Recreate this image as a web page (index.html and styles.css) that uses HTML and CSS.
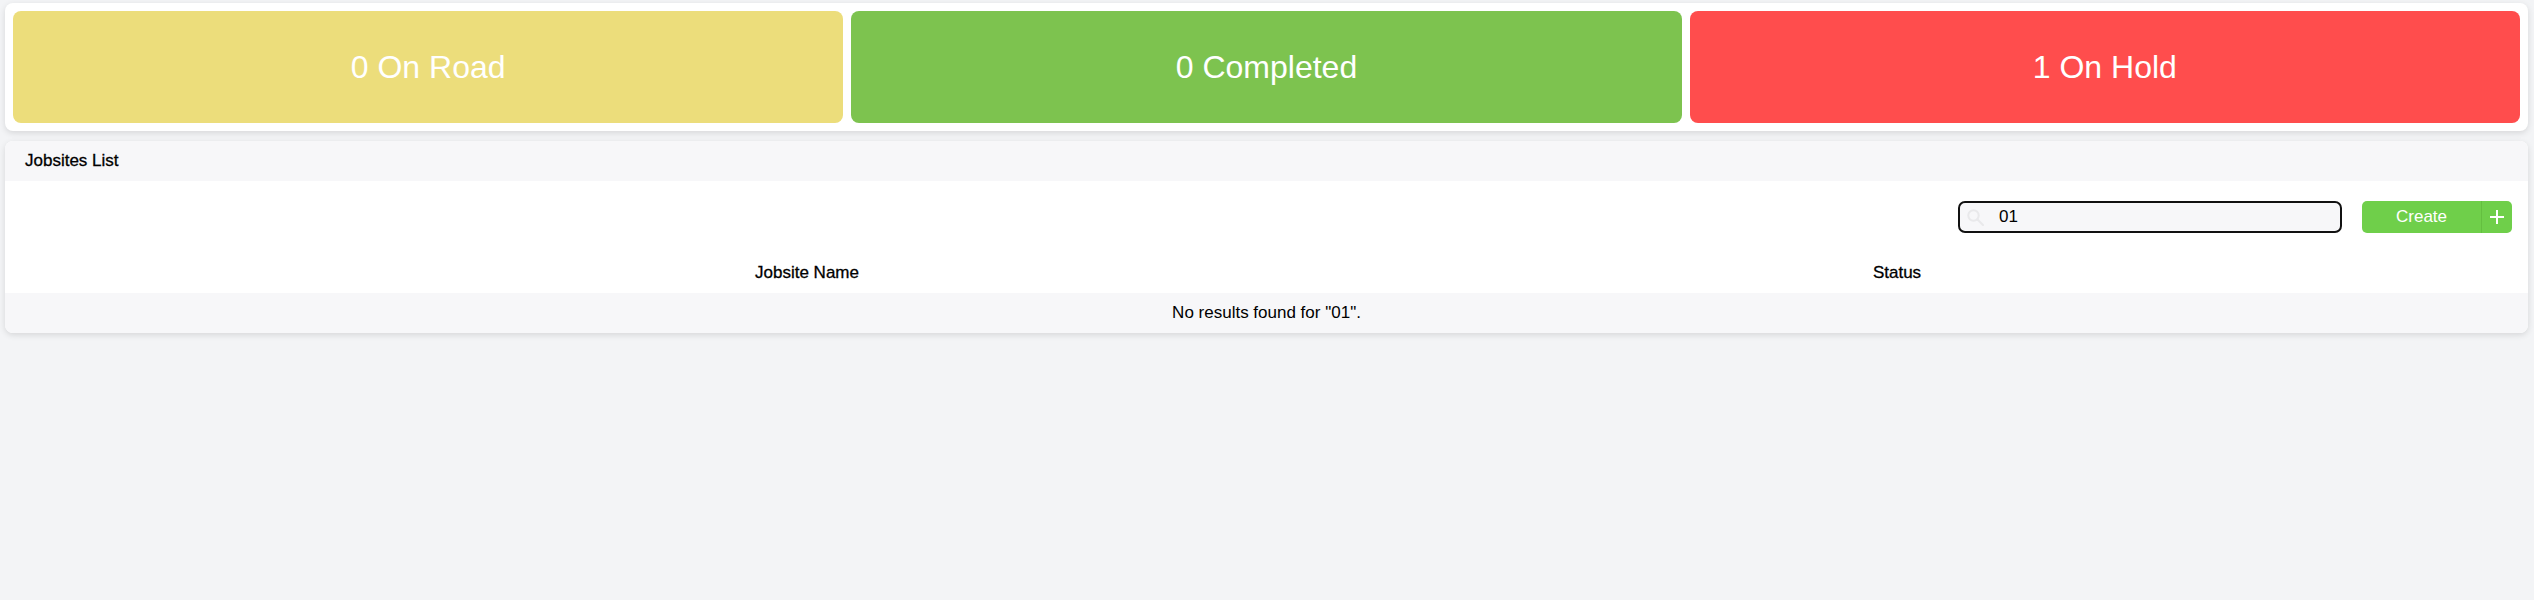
FILE: index.html
```html
<!DOCTYPE html>
<html lang="en">
<head>
    <meta charset="UTF-8">
    <title>Jobsites</title>
    <link rel="stylesheet" href="styles.css">
</head>
<body>
<div class="summary">
    <div class="summary-card on-road">0 On Road</div>
    <div class="summary-card completed">0 Completed</div>
    <div class="summary-card on-hold">1 On Hold</div>
</div>
<div class="jobsites">
    <div class="jobsites-title">Jobsites List</div>
    <div class="toolbar">
        <div class="search">
            <svg class="search-icon" width="17" height="17" viewBox="0 0 17 17" fill="none" stroke="#e9e9eb" stroke-width="2">
                <circle cx="6.5" cy="6.5" r="5.2"/>
                <path d="M10.5 10.5L16 16" stroke-linecap="round"/>
            </svg>
            <input type="text" name="search" value="01">
        </div>
        <div class="create">
            <button class="create-label">Create</button>
            <button class="create-plus">
                <svg width="14" height="14" viewBox="0 0 14 14" stroke="#fff" stroke-width="2">
                    <path d="M7 0V14M0 7H14"/>
                </svg>
            </button>
        </div>
    </div>
    <table>
        <colgroup>
            <col class="col-name">
            <col class="col-status">
            <col>
        </colgroup>
        <thead>
            <tr>
                <th>Jobsite Name</th>
                <th>Status</th>
                <th></th>
            </tr>
        </thead>
        <tbody>
            <tr>
                <td colspan="3">No results found for "01".</td>
            </tr>
        </tbody>
    </table>
</div>
</body>
</html>
```

FILE: styles.css
```css
* {
    margin: 0;
    padding: 0;
    box-sizing: border-box;
}

html, body {
    height: 100%;
}

body {
    padding: 3px 6px 3px 5px;
    background-color: #f3f4f6;
    font-family: "Liberation Sans", Arial, sans-serif;
    font-size: 17px;
    color: #000;
}

.summary {
    display: grid;
    grid-template-columns: repeat(3, 1fr);
    grid-gap: 8px;
    padding: 8px;
    background-color: #fff;
    border-radius: 8px;
    box-shadow: 0 2px 6px rgba(0, 0, 0, 0.12);
}

.summary-card {
    display: flex;
    align-items: center;
    justify-content: center;
    height: 112px;
    border-radius: 8px;
    font-size: 32px;
    color: #fff;
}

.on-road {
    background-color: #ecdd7b;
}

.completed {
    background-color: #7dc34f;
}

.on-hold {
    background-color: #ff4d4d;
}

.jobsites {
    margin-top: 10px;
    background-color: #fff;
    border-radius: 8px;
    box-shadow: 0 2px 6px rgba(0, 0, 0, 0.12);
    overflow: hidden;
}

.jobsites-title {
    height: 40px;
    padding-left: 20px;
    line-height: 40px;
    background-color: #f7f7f9;
    -webkit-text-stroke: 0.3px #000;
}

.toolbar {
    display: flex;
    justify-content: flex-end;
    gap: 20px;
    padding: 20px 16px 20px 0;
}

.search {
    position: relative;
    width: 384px;
    height: 32px;
}

.search-icon {
    position: absolute;
    top: 8px;
    left: 9px;
}

.search input {
    width: 100%;
    height: 100%;
    padding-left: 39px;
    border: 2px solid #111;
    border-radius: 7px;
    background-color: #f7f7f9;
    font-family: inherit;
    font-size: 17px;
    color: #000;
    outline: none;
}

.create {
    display: flex;
    width: 150px;
    height: 32px;
}

.create button {
    border: none;
    background-color: #6fcf4a;
    font-family: inherit;
    font-size: 17px;
    color: #fff;
    cursor: pointer;
}

.create-label {
    flex: 1;
    border-radius: 5px 0 0 5px;
}

.create .create-plus {
    display: flex;
    align-items: center;
    justify-content: center;
    width: 31px;
    border-left: 1px solid #64bf40;
    border-radius: 0 5px 5px 0;
}

table {
    width: 100%;
    table-layout: fixed;
    border-collapse: collapse;
}

.col-name {
    width: 1604px;
}

.col-status {
    width: 576px;
}

th, td {
    height: 40px;
    font-weight: normal;
    text-align: center;
}

th {
    -webkit-text-stroke: 0.3px #000;
}

td {
    background-color: #f7f7f9;
}
```
